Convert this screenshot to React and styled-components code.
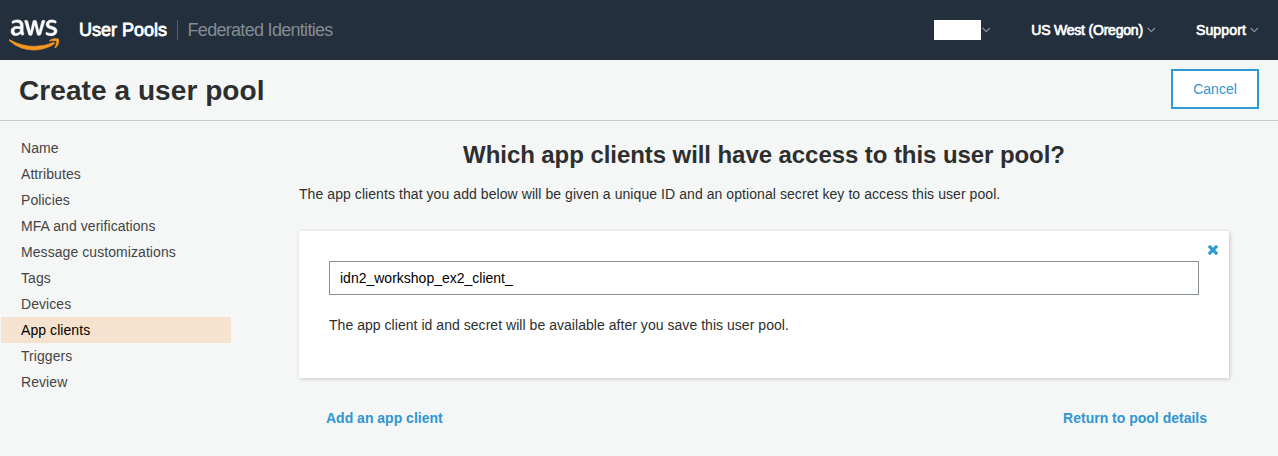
import React from "react";
import styled, { createGlobalStyle } from "styled-components";
import { FaAws } from "react-icons/fa";

const Global = createGlobalStyle`
  *, *::before, *::after { box-sizing: border-box; }
  body {
    margin: 0;
    background: #f5f7f7;
    color: #2c2f2e;
    font: 14px/20px "Liberation Sans", Arial, sans-serif;
  }
  h1, h2, p, ul { margin: 0; padding: 0; }
  a { text-decoration: none; color: inherit; }
`;

const Page = styled.div`
  height: 456px;
  overflow: hidden;
`;

const TopBar = styled.header`
  display: flex;
  align-items: center;
  height: 60px;
  padding: 0 19px 0 9px;
  background: #232f3d;
  color: #fff;
`;

const Logo = styled.div`
  display: flex;
  width: 50px;
  margin-right: 20px;
  padding-top: 10px;
  svg { display: block; width: 50px; height: 40px; }
  svg path { fill: url(#awsFill); stroke: url(#awsFill); stroke-width: 9; }
`;

const Defs = styled.svg`
  && { width: 0; height: 0; }
`;

const ServiceLink = styled.a`
  font-size: 18px;
  line-height: 20px;
  white-space: nowrap;
  color: ${(p) => (p.$active ? "#fff" : "#848b91")};
  -webkit-text-stroke: ${(p) => (p.$active ? "0.8px #fff" : "0")};
  letter-spacing: ${(p) => (p.$active ? "0" : "-0.7px")};
  & + & {
    margin-left: 10px;
    padding-left: 9.5px;
    border-left: 1px solid #55606b;
  }
`;

const BarMenus = styled.nav`
  display: flex;
  align-items: center;
  gap: 40px;
  margin-left: auto;
`;

const MenuButton = styled.a`
  display: flex;
  align-items: center;
  gap: ${(p) => p.$iconGap ?? 4}px;
  line-height: 20px;
  white-space: nowrap;
  -webkit-text-stroke: 0.7px #fff;
  letter-spacing: ${(p) => p.$ls || 0}px;
`;

const AccountName = styled.span`
  width: 47px;
  height: 20px;
  background: #fff;
`;

const TitleBar = styled.div`
  display: flex;
  align-items: flex-start;
  justify-content: space-between;
  height: 61px;
  padding: 9px 19px 0;
  border-bottom: 1px solid #c8cccb;
`;

const Title = styled.h1`
  margin-top: 5px;
  font-size: 28px;
  line-height: 34px;
  letter-spacing: 0.07px;
`;

const CancelButton = styled.button`
  width: 88px;
  height: 40px;
  padding: 0;
  border: 2px solid #2e9bd6;
  background: #fff;
  color: #2e96d2;
  font: 14px/20px "Liberation Sans", Arial, sans-serif;
`;

const Body = styled.div`
  display: flex;
  padding-left: 1px;
`;

const SideNav = styled.ul`
  width: 230px;
  margin: 14px 68px 0 0;
  list-style: none;
`;

const SideItem = styled.li`
  height: 26px;
  padding-left: 20px;
  line-height: 26px;
  letter-spacing: 0.07px;
  background: ${(p) => (p.$active ? "#f6e3cf" : "transparent")};
  color: ${(p) => (p.$active ? "#000" : "#444")};
`;

const Main = styled.main`
  width: 930px;
`;

const Heading = styled.h2`
  margin-top: 18px;
  font-size: 24px;
  line-height: 32px;
  letter-spacing: -0.07px;
  text-align: center;
`;

const Intro = styled.p`
  margin-top: 13px;
  letter-spacing: 0.07px;
`;

const Card = styled.section`
  position: relative;
  height: 147px;
  margin-top: 27px;
  padding: 30px;
  background: #fff;
  box-shadow: 1px 1px 4px rgba(0, 0, 0, 0.2);
`;

const Remove = styled.button`
  position: absolute;
  top: 13.5px;
  right: 11px;
  display: flex;
  padding: 0;
  border: 0;
  background: none;
`;

const NameInput = styled.input`
  display: block;
  width: 100%;
  height: 34px;
  padding: 0 10px;
  border: 1px solid #879090;
  border-radius: 0;
  color: #000;
  background: #fff;
  font: 14px/20px "Liberation Sans", Arial, sans-serif;
`;

const Hint = styled.p`
  margin-top: 20px;
  letter-spacing: 0.04px;
`;

const Actions = styled.div`
  display: flex;
  justify-content: space-between;
  margin-top: 30px;
  padding: 0 22px 0 27px;
  color: #2e96d2;
  font-weight: bold;
`;

const Chevron = () => (
  <svg width="9" height="6" viewBox="0 0 9 6" fill="none" stroke="#8d959d" strokeWidth="1.1">
    <path d="M0.7 1l3.6 3.6L7.9 1" />
  </svg>
);

const CloseIcon = () => (
  <svg width="10" height="10" viewBox="302 366 1188 1188" fill="#2e9bd6">
    <path d="M1490 1322q0 40-28 68l-136 136q-28 28-68 28t-68-28l-294-294-294 294q-28 28-68 28t-68-28l-136-136q-28-28-28-68t28-68l294-294-294-294q-28-28-28-68t28-68l136-136q28-28 68-28t68 28l294 294 294-294q28-28 68-28t68 28l136 136q28 28 28 68t-28 68l-294 294 294 294q28 28 28 68z" />
  </svg>
);

const steps = [
  "Name",
  "Attributes",
  "Policies",
  "MFA and verifications",
  "Message customizations",
  "Tags",
  "Devices",
  "App clients",
  "Triggers",
  "Review",
];

export default function App() {
  return (
    <Page>
      <Global />
      <TopBar>
        <Logo>
          <Defs>
            <linearGradient id="awsFill" gradientUnits="userSpaceOnUse" x1="0" y1="0" x2="0" y2="512">
              <stop offset="0.58" stopColor="#fff" />
              <stop offset="0.58" stopColor="#f7981f" />
            </linearGradient>
          </Defs>
          <FaAws />
        </Logo>
        <ServiceLink $active>User Pools</ServiceLink>
        <ServiceLink>Federated Identities</ServiceLink>
        <BarMenus>
          <MenuButton $iconGap={1}>
            <AccountName />
            <Chevron />
          </MenuButton>
          <MenuButton $ls={-0.2}>
            US West (Oregon)
            <Chevron />
          </MenuButton>
          <MenuButton $ls={0.15}>
            Support
            <Chevron />
          </MenuButton>
        </BarMenus>
      </TopBar>
      <TitleBar>
        <Title>Create a user pool</Title>
        <CancelButton>Cancel</CancelButton>
      </TitleBar>
      <Body>
        <SideNav>
          {steps.map((step) => (
            <SideItem key={step} $active={step === "App clients"}>
              {step}
            </SideItem>
          ))}
        </SideNav>
        <Main>
          <Heading>Which app clients will have access to this user pool?</Heading>
          <Intro>
            The app clients that you add below will be given a unique ID and an optional secret key to access this
            user pool.
          </Intro>
          <Card>
            <Remove aria-label="Remove">
              <CloseIcon />
            </Remove>
            <NameInput defaultValue="idn2_workshop_ex2_client_" />
            <Hint>The app client id and secret will be available after you save this user pool.</Hint>
          </Card>
          <Actions>
            <a href="#add">Add an app client</a>
            <a href="#pool">Return to pool details</a>
          </Actions>
        </Main>
      </Body>
    </Page>
  );
}
